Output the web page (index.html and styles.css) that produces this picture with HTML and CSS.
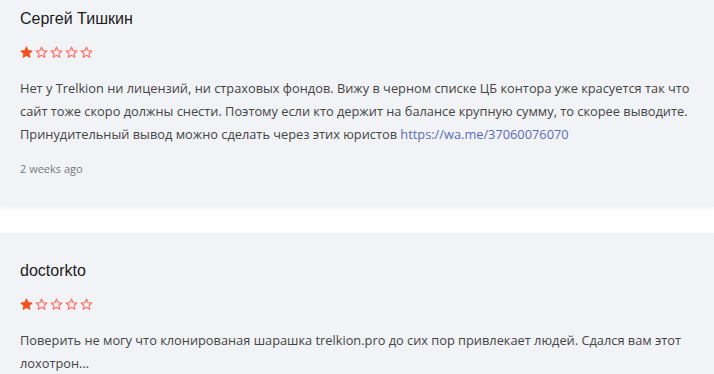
FILE: index.html
```html
<!DOCTYPE html>
<html lang="ru">
<head>
    <meta charset="UTF-8">
    <meta name="viewport" content="width=device-width, initial-scale=1.0">
    <title>Отзывы</title>
    <link rel="stylesheet" href="styles.css">
</head>
<body>
    <div class="reviews">
        <div class="review first">
            <div class="review-name">Сергей Тишкин</div>
            <div class="stars">
                <svg class="star on" viewBox="0 0 24 24"><path d="M12 2l2.9 6.6 7.1.6-5.4 4.7 1.6 7-6.2-3.7-6.2 3.7 1.6-7L2 9.2l7.1-.6z"/></svg>
                <svg class="star" viewBox="0 0 24 24"><path d="M12 2l2.9 6.6 7.1.6-5.4 4.7 1.6 7-6.2-3.7-6.2 3.7 1.6-7L2 9.2l7.1-.6z"/></svg>
                <svg class="star" viewBox="0 0 24 24"><path d="M12 2l2.9 6.6 7.1.6-5.4 4.7 1.6 7-6.2-3.7-6.2 3.7 1.6-7L2 9.2l7.1-.6z"/></svg>
                <svg class="star" viewBox="0 0 24 24"><path d="M12 2l2.9 6.6 7.1.6-5.4 4.7 1.6 7-6.2-3.7-6.2 3.7 1.6-7L2 9.2l7.1-.6z"/></svg>
                <svg class="star" viewBox="0 0 24 24"><path d="M12 2l2.9 6.6 7.1.6-5.4 4.7 1.6 7-6.2-3.7-6.2 3.7 1.6-7L2 9.2l7.1-.6z"/></svg>
            </div>
            <p class="review-text">Нет у Trelkion ни лицензий, ни страховых фондов. Вижу в черном списке ЦБ контора уже красуется так что сайт тоже скоро должны снести. Поэтому если кто держит на балансе крупную сумму, то скорее выводите. Принудительный вывод можно сделать через этих юристов <a href="#">https://wa.me/37060076070</a></p>
            <div class="review-date">2 weeks ago</div>
        </div>
        <div class="review">
            <div class="review-name">doctorkto</div>
            <div class="stars">
                <svg class="star on" viewBox="0 0 24 24"><path d="M12 2l2.9 6.6 7.1.6-5.4 4.7 1.6 7-6.2-3.7-6.2 3.7 1.6-7L2 9.2l7.1-.6z"/></svg>
                <svg class="star" viewBox="0 0 24 24"><path d="M12 2l2.9 6.6 7.1.6-5.4 4.7 1.6 7-6.2-3.7-6.2 3.7 1.6-7L2 9.2l7.1-.6z"/></svg>
                <svg class="star" viewBox="0 0 24 24"><path d="M12 2l2.9 6.6 7.1.6-5.4 4.7 1.6 7-6.2-3.7-6.2 3.7 1.6-7L2 9.2l7.1-.6z"/></svg>
                <svg class="star" viewBox="0 0 24 24"><path d="M12 2l2.9 6.6 7.1.6-5.4 4.7 1.6 7-6.2-3.7-6.2 3.7 1.6-7L2 9.2l7.1-.6z"/></svg>
                <svg class="star" viewBox="0 0 24 24"><path d="M12 2l2.9 6.6 7.1.6-5.4 4.7 1.6 7-6.2-3.7-6.2 3.7 1.6-7L2 9.2l7.1-.6z"/></svg>
            </div>
            <p class="review-text">Поверить не могу что клонированая шарашка trelkion.pro до сих пор привлекает людей. Сдался вам этот лохотрон...</p>
        </div>
    </div>
</body>
</html>
```

FILE: styles.css
```css
body {
    margin: 0;
    background-color: #fff;
    font-family: 'Open Sans', Arial, sans-serif;
    color: #444;
}
.reviews {
    display: flex;
    flex-direction: column;
    gap: 26px;
}
.review {
    background-color: #f2f3f7;
    padding: 28px 20px 30px;
    box-shadow: 0 2px 6px rgba(0, 0, 0, 0.04);
}
.review.first {
    padding-top: 9px; /* страница прокручена, верх карточки не виден */
}
.review-name {
    font-family: 'Liberation Sans', Arial, sans-serif;
    font-size: 16px;
    line-height: 20px;
    color: #1c1c1c;
}
.stars {
    display: flex;
    gap: 2px;
    margin-top: 17px;
    height: 13px;
}
.star {
    width: 13px;
    height: 13px;
    fill: none;
    stroke: #ff6f61;
    stroke-width: 2;
    stroke-linejoin: round;
}
.star.on {
    fill: #f4511e;
    stroke: #f4511e;
}
.review-text {
    margin: 18px 0 0;
    font-size: 12.8px;
    line-height: 23px;
    color: #444;
}
.review-text a {
    color: #5b6ab8;
    text-decoration: none;
}
.review-date {
    margin-top: 15px;
    font-size: 11px;
    line-height: 16px;
    color: #777;
}
```
